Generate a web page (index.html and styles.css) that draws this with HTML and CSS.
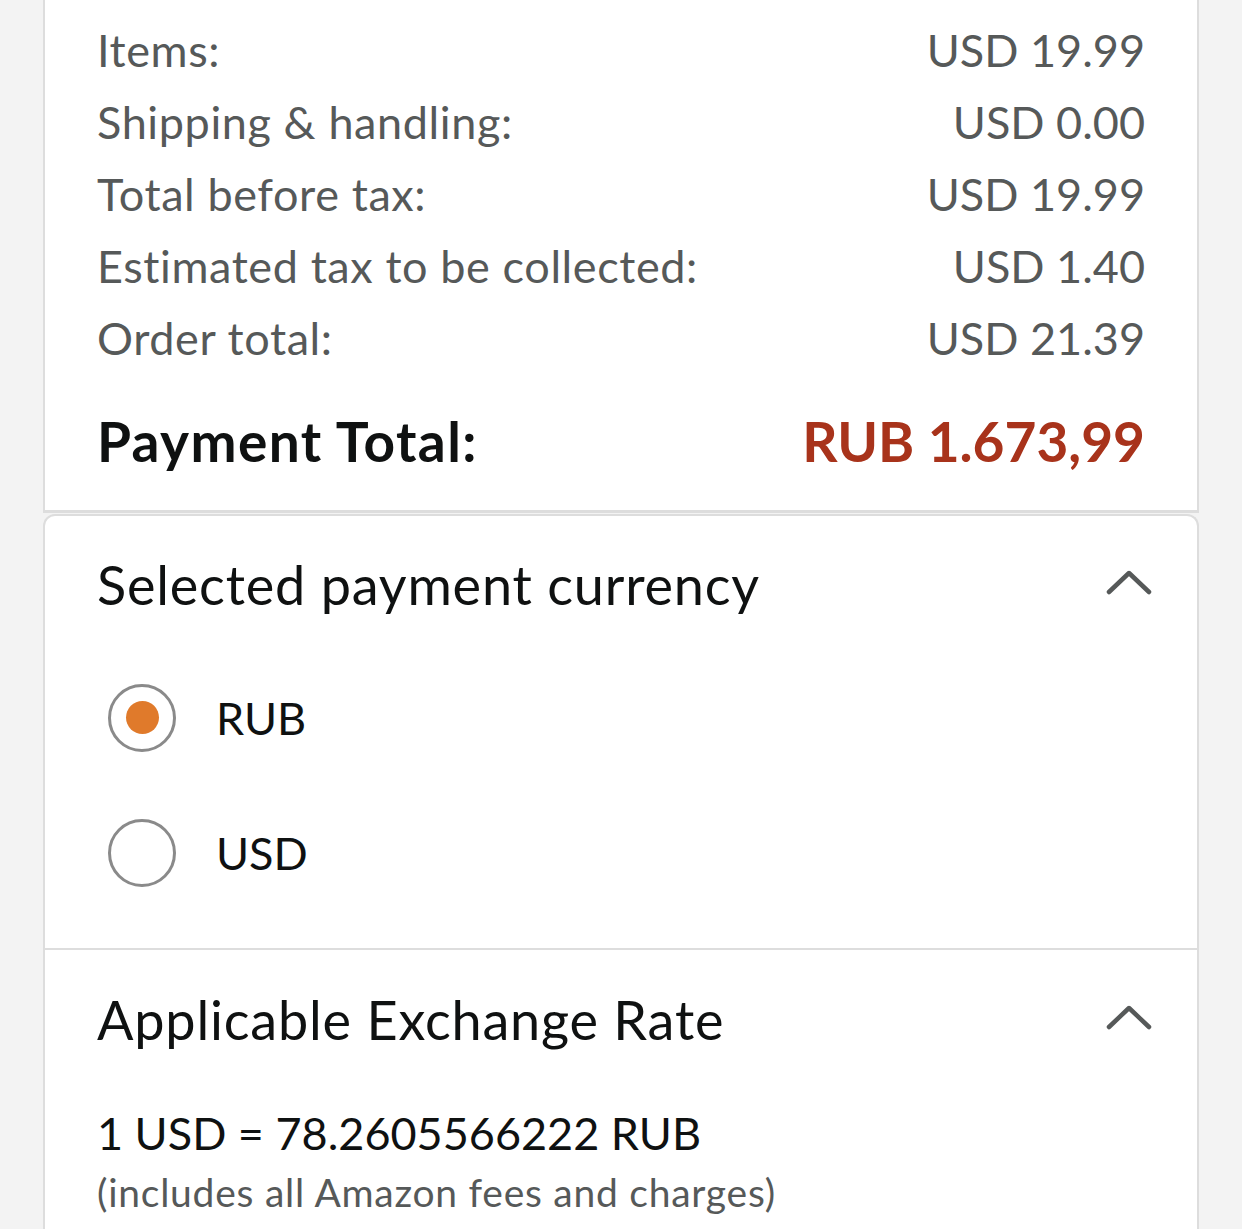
FILE: index.html
```html
<!DOCTYPE html>
<html>
    <head>
        <title>Payment currency</title>
        <link rel="stylesheet" href="styles.css">
    </head>
    <body>
        <div class="page">

            <div class="summary">
                <div class="row"><span class="label">Items:</span><span>USD 19.99</span></div>
                <div class="row"><span class="label">Shipping &amp; handling:</span><span>USD 0.00</span></div>
                <div class="row"><span class="label">Total before tax:</span><span>USD 19.99</span></div>
                <div class="row"><span class="label">Estimated tax to be collected:</span><span>USD 1.40</span></div>
                <div class="row"><span class="label">Order total:</span><span>USD 21.39</span></div>
                <div class="total"><span class="label">Payment Total:</span><span class="price">RUB 1.673,99</span></div>
            </div>

            <div class="panel">

                <div class="section">
                    <div class="head">
                        <span>Selected payment currency</span>
                        <svg class="chevron" width="46" height="30" viewBox="0 0 46 30">
                            <polyline points="3,24 23,5 43,24" fill="none" stroke="#565959" stroke-width="4.5" stroke-linecap="round" stroke-linejoin="round"/>
                        </svg>
                    </div>
                    <div class="options">
                        <div class="choice">
                            <span class="radio checked"></span>
                            <span>RUB</span>
                        </div>
                        <div class="choice">
                            <span class="radio"></span>
                            <span>USD</span>
                        </div>
                    </div>
                </div>

                <div class="section rate">
                    <div class="head">
                        <span>Applicable Exchange Rate</span>
                        <svg class="chevron" width="46" height="30" viewBox="0 0 46 30">
                            <polyline points="3,24 23,5 43,24" fill="none" stroke="#565959" stroke-width="4.5" stroke-linecap="round" stroke-linejoin="round"/>
                        </svg>
                    </div>
                    <div class="value">1 USD = 78.2605566222 RUB</div>
                    <div class="note">(includes all Amazon fees and charges)</div>
                </div>

            </div>

        </div>
    </body>
</html>
```

FILE: styles.css
```css
body {
    margin: 0;
    background-color: #f3f3f3;
    font-family: Lato, "Noto Sans", sans-serif;
}

.page {
    padding: 0 43px;
}

.summary {
    background-color: #ffffff;
    border: 2px solid #dddddd;
    border-top: 0;
    border-bottom-width: 3px;
    padding: 14px 52px 33px 52px;
}

.row {
    display: flex;
    justify-content: space-between;
    font-size: 45px;
    line-height: 72px;
    color: #565959;
}

.row .label {
    letter-spacing: 0.6px;
}

.total {
    display: flex;
    justify-content: space-between;
    margin-top: 31px;
    font-size: 55px;
    line-height: 72px;
    font-weight: bold;
    color: #0f1111;
}

.total .label {
    letter-spacing: 1.4px;
}

.price {
    color: #a8331b;
}

.panel {
    margin-top: 1px;
    background-color: #ffffff;
    border: 2px solid #dddddd;
    border-bottom: 0;
    border-radius: 12px 12px 0 0;
}

.section {
    padding: 33px 45px 28px 52px;
}

.rate {
    border-top: 2px solid #dddddd;
    padding-top: 34px;
    padding-bottom: 60px;
}

.head {
    display: flex;
    justify-content: space-between;
    align-items: center;
    font-size: 54px;
    line-height: 72px;
    letter-spacing: 0.8px;
    color: #0f1111;
}

.chevron {
    display: block;
    margin-top: -4px;
}

.options {
    padding-top: 29px;
}

.choice {
    display: flex;
    align-items: center;
    gap: 40px;
    height: 135px;
    padding-left: 11px;
    font-size: 45px;
    color: #0f1111;
}

.radio {
    width: 62px;
    height: 62px;
    border: 3px solid #8a8a8a;
    border-radius: 50%;
    display: flex;
    align-items: center;
    justify-content: center;
}

.radio.checked::after {
    content: "";
    width: 33px;
    height: 33px;
    border-radius: 50%;
    background-color: #e07a2b;
}

.value {
    margin-top: 47px;
    font-size: 45px;
    line-height: 60px;
    color: #0f1111;
}

.note {
    font-size: 39px;
    line-height: 58px;
    letter-spacing: 0.75px;
    color: #565959;
}
```
